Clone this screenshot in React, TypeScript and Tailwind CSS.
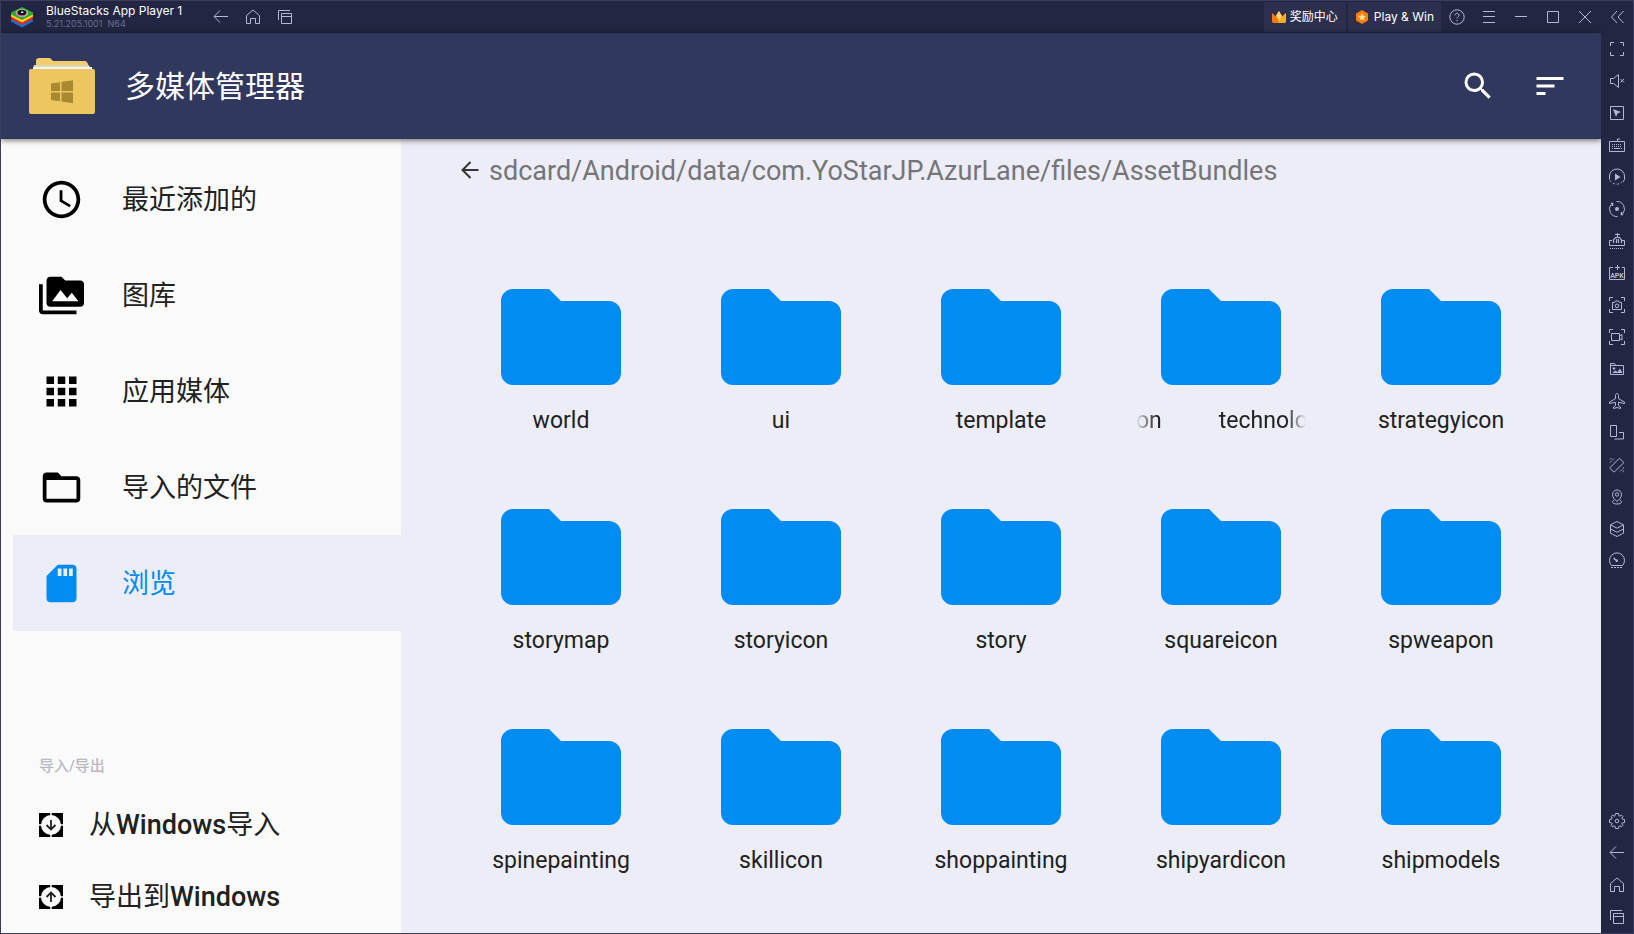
import type { ReactNode } from "react";
import {
  MdAccessTime,
  MdApps,
  MdFolderOpen,
  MdPermMedia,
  MdSdCard,
  MdSearch,
  MdSort,
} from "react-icons/md";

function Glyph({ children }: { children: ReactNode }) {
  return (
    <svg
      viewBox="0 0 20 20"
      className="size-5 shrink-0"
      fill="none"
      stroke="currentColor"
      strokeWidth="1"
      aria-hidden="true"
    >
      {children}
    </svg>
  );
}

function BarButton({ label, children }: { label: string; children: ReactNode }) {
  return (
    <button
      type="button"
      aria-label={label}
      className="flex size-8 shrink-0 items-center justify-center text-[#b4b7d8]"
    >
      <Glyph>{children}</Glyph>
    </button>
  );
}

const backShape = <path d="M17 9.5H3.5M9 3.5l-6 6 6 6" />;
const homeShape = <path d="M3.5 16.5V8.5L10 3l6.5 5.5v8h-4v-5h-5v5z" />;
const recentsShape = (
  <>
    <path d="M3.5 13V3.5H15" />
    <path d="M6.5 6.5h10v10h-10zM6.5 9.5h10" />
  </>
);

const railTop: { label: string; shape: ReactNode }[] = [
  { label: "Collapse", shape: <path d="M10 4L4.500 10l5.500 6M16.500 4L11 10l5.500 6" /> },
  {
    label: "Full screen",
    shape: <path d="M3.5 7V3.5H7M13 3.5h3.5V7M16.5 13v3.5H13M7 16.5H3.5V13" />,
  },
  {
    label: "Mute",
    shape: <path d="M3.5 7.5h3l5-4v13l-5-4h-3zM13.500 8l3.5 3.5M17 8l-3.5 3.5" />,
  },
  {
    label: "Lock cursor",
    shape: (
      <>
        <path d="M3.500 3.500h13v13h-13z" />
        <path d="M6 6l8 3-3.500 1.500L9 14z" fill="currentColor" stroke="none" />
      </>
    ),
  },
  {
    label: "Game controls",
    shape: (
      <>
        <path d="M2.500 6.500h15v10h-15zM10.500 6V4h2.500" />
        <path d="M5 9.500h10M5 11.500h10" strokeDasharray="1 1" />
        <path d="M5 13.500h1M7 13.500h6M14 13.500h1" />
      </>
    ),
  },
  {
    label: "Macro",
    shape: (
      <>
        <path d="M2.500 12.500V9a7.500 7 0 0 1 15 0v3.500l-1.500 2.500" />
        <path d="M3 13.500a7.500 7 0 0 0 12 1.500" strokeDasharray="2 2" />
        <path d="M8 6.500l5.500 3.500L8 13.500z" fill="currentColor" stroke="none" />
      </>
    ),
  },
  {
    label: "Sync",
    shape: (
      <>
        <path d="M9.500 2.500a7.500 7.500 0 0 1 6.500 12M10.500 17.500a7.500 7.500 0 0 1-6.500-12" />
        <path d="M4 4.500h1.500V7M14.500 13v2.500H16" strokeWidth="1.500" />
        <circle cx="10" cy="10" r="2" fill="currentColor" stroke="none" />
      </>
    ),
  },
  {
    label: "Multi-instance manager",
    shape: (
      <>
        <path d="M10.500 2v4M8 3.500h5M5 9.500H2.500v5h15v-5H15" />
        <path d="M6.500 12V9l2-2.500h4l2 2.500v3M9.500 12V8M11.500 12V8" strokeWidth="1.200" />
        <path d="M3 17.500h14" strokeDasharray="1 1" />
      </>
    ),
  },
  {
    label: "Install APK",
    shape: (
      <>
        <path d="M6 4.500H2.500v12h15v-12H15M10.500 2v5M8 4.500h5" />
        <text
          x="10"
          y="15"
          textAnchor="middle"
          fill="currentColor"
          stroke="none"
          className="font-['Roboto',sans-serif] text-[7px] font-bold"
        >
          APK
        </text>
      </>
    ),
  },
  {
    label: "Screenshot",
    shape: (
      <>
        <path d="M2.500 6V2.500H6M14 2.500h3.500V6M17.500 14v3.500H14M6 17.500H2.500V14" />
        <path d="M5.500 7.500h2l1-1.500h3l1 1.500h2v7h-9z" />
        <circle cx="10" cy="10.800" r="1.800" />
      </>
    ),
  },
  {
    label: "Record screen",
    shape: (
      <>
        <path d="M2.500 6V2.500H6M14 2.500h3.500V6M17.500 14v3.500H14M6 17.500H2.500V14" />
        <path d="M4.500 6.500h8v7h-8zM12.500 9l2.500-1.500v5.500l-2.500-1.500" />
      </>
    ),
  },
  {
    label: "Media manager",
    shape: (
      <>
        <path d="M3.500 15.500v-11h4l1.500 2h7.500v9zM3.500 6.500H9" />
        <path d="M5 14l3.500-2.500 2 1.500L13 9.500l2.500 4.500z" fill="currentColor" stroke="none" />
        <circle cx="7" cy="9.500" r="1.200" fill="currentColor" stroke="none" />
      </>
    ),
  },
  {
    label: "Airplane mode",
    shape: (
      <path d="M10 2.500c-.9 0-1.500.8-1.500 2v3.200L2.500 11v1.500l6-1.200v3.200l-2 1.500v1.500l3.500-1 3.500 1V16l-2-1.500v-3.200l6 1.200V11l-6-3.300V4.500c0-1.200-.6-2-1.500-2z" />
    ),
  },
  {
    label: "Rotate screen",
    shape: <path d="M3.500 2.500h6v11h-6zM12 9.500h4.500v6.500h-9" />,
  },
  {
    label: "Shake",
    shape: (
      <>
        <path d="M3.300 12.300L11.800 3.800l1-.3 3.700 3.700-.3 1-8.500 8.500-1 .3L3 13.300z" />
        <path d="M3 7.500l4.500-4.500M3 4.500L4.500 3M17 12.500L12.500 17M17 15.500L15.500 17" strokeDasharray="2 1" />
      </>
    ),
  },
  {
    label: "Location",
    shape: (
      <>
        <path d="M10 14.500c-2-1.500-4.500-4-4.500-7a4.500 4.500 0 0 1 9 0c0 3-2.500 5.500-4.500 7z" />
        <circle cx="10" cy="7.500" r="1.700" />
        <path d="M7 13l-1.500 1.500c0 2 2 2.500 4.500 2.500s4.500-.5 4.500-2.500L13 13" />
      </>
    ),
  },
  {
    label: "Layers",
    shape: (
      <path d="M10 2.500l6.500 3.300L10 9.200 3.500 5.800zM3.500 5.800v8.400l6.500 3.300 6.500-3.300V5.800M3.500 10l6.500 3.300 6.500-3.300" />
    ),
  },
  {
    label: "Performance",
    shape: (
      <>
        <path d="M4.500 14.500a7.500 7.500 0 1 1 11 0z" />
        <path d="M6.500 7l3 2.500" strokeWidth="1.500" />
        <circle cx="9.800" cy="9.800" r="1.200" fill="currentColor" stroke="none" />
        <path d="M4 16.500h12" strokeDasharray="2 1" />
      </>
    ),
  },
];

const railBottom: { label: string; shape: ReactNode }[] = [
  {
    label: "Settings",
    shape: (
      <>
        <path
          d="M8.500 2.500L11.500 2.500 12 4.800 12.800 5.200 14.400 4.100 15.900 5.600 14.800 7.200 15.200 8 17.500 8.500 17.500 11.500 15.200 12 14.800 12.800 15.900 14.400 14.400 15.900 12.800 14.800 12 15.200 11.500 17.500 8.500 17.500 8 15.200 7.200 14.800 5.600 15.900 4.100 14.400 5.200 12.800 4.800 12 2.500 11.500 2.500 8.500 4.800 8 5.200 7.200 4.100 5.600 5.600 4.100 7.200 5.200 8 4.800z"
          strokeLinejoin="round"
        />
        <circle cx="10" cy="10" r="1.800" />
      </>
    ),
  },
  { label: "Back", shape: backShape },
  { label: "Home", shape: homeShape },
  { label: "Recent apps", shape: recentsShape },
];

const windowControls: { label: string; shape: ReactNode }[] = [
  {
    label: "Help",
    shape: (
      <>
        <circle cx="10" cy="10" r="7.200" />
        <path d="M8 8.300c0-1.200.8-2 2-2s2 .8 2 1.900c0 1.500-2 1.500-2 3.300M10 13v1.200" />
      </>
    ),
  },
  { label: "Menu", shape: <path d="M4 4.500h12M4 9.500h12M4 15.500h12" /> },
  { label: "Minimize", shape: <path d="M4 9.500h12" /> },
  { label: "Maximize", shape: <path d="M4.500 4.500h11v11h-11z" /> },
  { label: "Close", shape: <path d="M4 4l12 12M16 4L4 16" /> },
];

function AppLogo() {
  return (
    <svg viewBox="0 0 24 22" className="h-[22px] w-6" aria-hidden="true">
      <path d="M1 14l11-5 11 5v1.500L12 21.500 1 15.500z" fill="#0f76c8" />
      <path d="M1 11l11-5 11 5v2L12 19 1 13z" fill="#e8252a" />
      <path d="M1 8.500l11-5 11 5v2L12 16.500 1 10.500z" fill="#ffd91a" />
      <path d="M1 6.500L12 1l11 5.500v2L12 14 1 8.500z" fill="#2ea836" />
      <ellipse cx="12" cy="7" rx="6" ry="4" fill="#b8e0a0" />
      <ellipse cx="11.500" cy="7.300" rx="5" ry="3.300" fill="#e05cb0" />
      <ellipse cx="12" cy="6.500" rx="4.400" ry="2.700" fill="#10131c" />
      <ellipse cx="12.200" cy="6.200" rx="1.300" ry=".9" fill="#dfe8ff" />
    </svg>
  );
}

function TitleBar() {
  return (
    <div className="flex h-8 items-center bg-[#232642]">
      <div className="flex items-center pl-[9px]">
        <AppLogo />
        <div className="ml-3 w-[151px] font-['Inter',sans-serif] whitespace-nowrap">
          <div className="text-xs leading-[14px] text-white">BlueStacks App Player 1</div>
          <div className="text-[9px] leading-3 text-[#696d92]">5.21.205.1001&nbsp; N64</div>
        </div>
      </div>
      <div className="ml-2 flex">
        <BarButton label="Back">{backShape}</BarButton>
        <BarButton label="Home">{homeShape}</BarButton>
        <BarButton label="Recent apps">{recentsShape}</BarButton>
      </div>
      <div className="ml-auto flex items-center font-['Inter','Noto_Sans_CJK_SC',sans-serif] text-xs whitespace-nowrap text-white">
        <button type="button" className="mr-0.5 flex h-[30px] items-center gap-1 bg-[#2c2f4e] px-2">
          <svg viewBox="0 0 14 12" className="h-3 w-[14px]" aria-hidden="true">
            <path d="M0 2l4 3.500L7 0l3 5.500L14 2v8.500L13 12H1L0 10.500z" fill="#fa7a10" />
            <path d="M4 4.500L7 0l3 5-2 5H7z" fill="#ffd36b" />
            <path d="M14 2v8.500L13 12H6l4-6z" fill="#ffb01f" />
          </svg>
          奖励中心
        </button>
        <button type="button" className="flex h-[30px] items-center gap-[5px] bg-[#2c2f4e] px-[7px]">
          <svg viewBox="0 0 14 14" className="size-[14px]" aria-hidden="true">
            <path d="M7 0l6 3.500v7L7 14l-6-3.500v-7z" fill="#ff7d0a" />
            <path
              d="M7 3l1.200 2.700 2.900.3-2.200 1.900.7 2.900L7 9.300l-2.600 1.500.7-2.900L2.900 6l2.900-.3z"
              fill="#ffe08a"
            />
          </svg>
          Play &amp; Win
        </button>
        <div className="flex">
          {windowControls.map((c) => (
            <BarButton key={c.label} label={c.label}>
              {c.shape}
            </BarButton>
          ))}
        </div>
      </div>
    </div>
  );
}

function ManagerLogo() {
  return (
    <svg viewBox="0 0 68 58" className="h-[58px] w-[68px]" aria-hidden="true">
      <path d="M8 14V4q0-3 3-3h10q2 0 3 2l1 1h32q2 0 3 3l1 7z" fill="#f3cd6c" />
      <path d="M6 8h55l1 4H5z" fill="#ddd8b4" />
      <path d="M5 10h59v5H5z" fill="#f4f4f4" />
      <path d="M3 12h62q2 0 2 2v41q0 2-2 2H3q-2 0-2-2V14q0-2 2-2z" fill="#eec660" />
      <path
        d="M23 26.500l9-1.300V34h-9zM33.500 25l11.500-1.700V34H33.500zM23 35.500h9v8.800l-9-1.300zM33.500 35.500H45v10.700l-11.500-1.700z"
        fill="#a98a30"
      />
    </svg>
  );
}

function Header() {
  return (
    <header className="relative z-10 flex h-[106px] items-center bg-[#30385e] pr-[33px] pl-[27px] shadow-[0_1px_6px_rgba(0,0,0,0.6)]">
      <ManagerLogo />
      <h1 className="ml-[29px] pt-0.5 text-[30px] leading-10 text-white">多媒体管理器</h1>
      <div className="ml-auto flex gap-9 text-white">
        <button type="button" aria-label="搜索">
          <MdSearch className="size-9" />
        </button>
        <button type="button" aria-label="排序">
          <MdSort className="size-9" />
        </button>
      </div>
    </header>
  );
}

const navItems = [
  { label: "最近添加的", Icon: MdAccessTime, active: false },
  { label: "图库", Icon: MdPermMedia, active: false },
  { label: "应用媒体", Icon: MdApps, active: false },
  { label: "导入的文件", Icon: MdFolderOpen, active: false },
  { label: "浏览", Icon: MdSdCard, active: true },
];

function TransferIcon({ up }: { up: boolean }) {
  return (
    <svg viewBox="0 0 24 24" className="size-6 shrink-0" fill="none" aria-hidden="true">
      <path d="M0 0h24v24H0z" fill="#000" />
      <path d="M12 0v24M0 12h24" stroke="#fafafa" strokeWidth="1.500" />
      <circle cx="12" cy="12" r="10" fill="#fafafa" />
      <path
        d={up ? "M12 17V7.500M7.500 12L12 7.500l4.500 4.500" : "M12 7v9.500M7.500 12l4.500 4.500 4.500-4.500"}
        stroke="#222"
        strokeWidth="1.800"
      />
    </svg>
  );
}

function Sidebar() {
  return (
    <nav className="flex w-[400px] shrink-0 flex-col bg-[#fafafa] pt-3 pl-3 text-[#212121]">
      {navItems.map(({ label, Icon, active }) => (
        <a
          key={label}
          href="#"
          className={
            active
              ? "flex h-24 items-center gap-[38px] bg-[#ecedf6] pl-[26px] text-[27px] text-[#008cf0]"
              : "flex h-24 items-center gap-[38px] pl-[26px] text-[27px]"
          }
        >
          <Icon className={active ? "size-[45px] shrink-0" : "size-[45px] shrink-0 text-black"} />
          <span className="pt-0.5">{label}</span>
        </a>
      ))}
      <h2 className="mt-auto mb-[13px] pt-6 pl-[26px] text-[15px] leading-5 font-medium text-[#b9b9bf]">
        导入/导出
      </h2>
      <button type="button" className="flex h-[72px] items-center gap-[26px] pl-[26px] text-[27px]">
        <TransferIcon up={false} />
        <span>
          从<span className="font-medium">Windows</span>导入
        </span>
      </button>
      <button type="button" className="flex h-[72px] items-center gap-[26px] pl-[26px] text-[27px]">
        <TransferIcon up />
        <span>
          导出到<span className="font-medium">Windows</span>
        </span>
      </button>
    </nav>
  );
}

const folders = [
  "world",
  "ui",
  "template",
  "technologyicon",
  "strategyicon",
  "storymap",
  "storyicon",
  "story",
  "squareicon",
  "spweapon",
  "spinepainting",
  "skillicon",
  "shoppainting",
  "shipyardicon",
  "shipmodels",
];

function ScrollingLabel() {
  return (
    <span className="flex w-[170px] gap-[57px] overflow-hidden [mask-image:linear-gradient(to_right,transparent,black_20px,black_150px,transparent)]">
      <span>on</span>
      <span>technologyicon</span>
    </span>
  );
}

function Browser() {
  return (
    <main className="min-w-0 grow bg-[#ecedf6]">
      <div className="flex h-[62px] items-center pl-[59px]">
        <button type="button" aria-label="返回">
          <svg viewBox="0 0 20 20" className="size-5" fill="none" stroke="#333" strokeWidth="2" aria-hidden="true">
            <path d="M18.500 10H3M10.500 2L2.500 10l8 8" />
          </svg>
        </button>
        <span className="ml-[9px] pt-0.5 text-[27px] whitespace-nowrap text-[#757578]">
          sdcard/Android/data/com.YoStarJP.AzurLane/files/AssetBundles
        </span>
      </div>
      <div className="grid grid-cols-5 px-[50px] pt-14">
        {folders.map((name) => (
          <button
            key={name}
            type="button"
            className="flex h-[220px] flex-col items-center pt-8 text-[23px] leading-8 text-[#212121]"
          >
            <svg viewBox="0 0 120 96" className="h-24 w-[120px]" aria-hidden="true">
              <path
                d="M12 0H48L60 12H108A12 12 0 0 1 120 24V84A12 12 0 0 1 108 96H12A12 12 0 0 1 0 84V12A12 12 0 0 1 12 0z"
                fill="#008cf0"
              />
            </svg>
            <span className="mt-5">{name === "technologyicon" ? <ScrollingLabel /> : name}</span>
          </button>
        ))}
      </div>
    </main>
  );
}

export default function App() {
  return (
    <div className="flex min-h-screen border border-[#3a3d60] bg-[#232642] font-['Roboto','Noto_Sans_CJK_SC',sans-serif]">
      <div className="flex min-w-0 grow flex-col overflow-hidden">
        <TitleBar />
        <Header />
        <div className="flex grow">
          <Sidebar />
          <Browser />
        </div>
      </div>
      <aside className="flex w-8 shrink-0 flex-col">
        {railTop.map((item) => (
          <BarButton key={item.label} label={item.label}>
            {item.shape}
          </BarButton>
        ))}
        <div className="mt-auto flex flex-col">
          {railBottom.map((item) => (
            <BarButton key={item.label} label={item.label}>
              {item.shape}
            </BarButton>
          ))}
        </div>
      </aside>
    </div>
  );
}
